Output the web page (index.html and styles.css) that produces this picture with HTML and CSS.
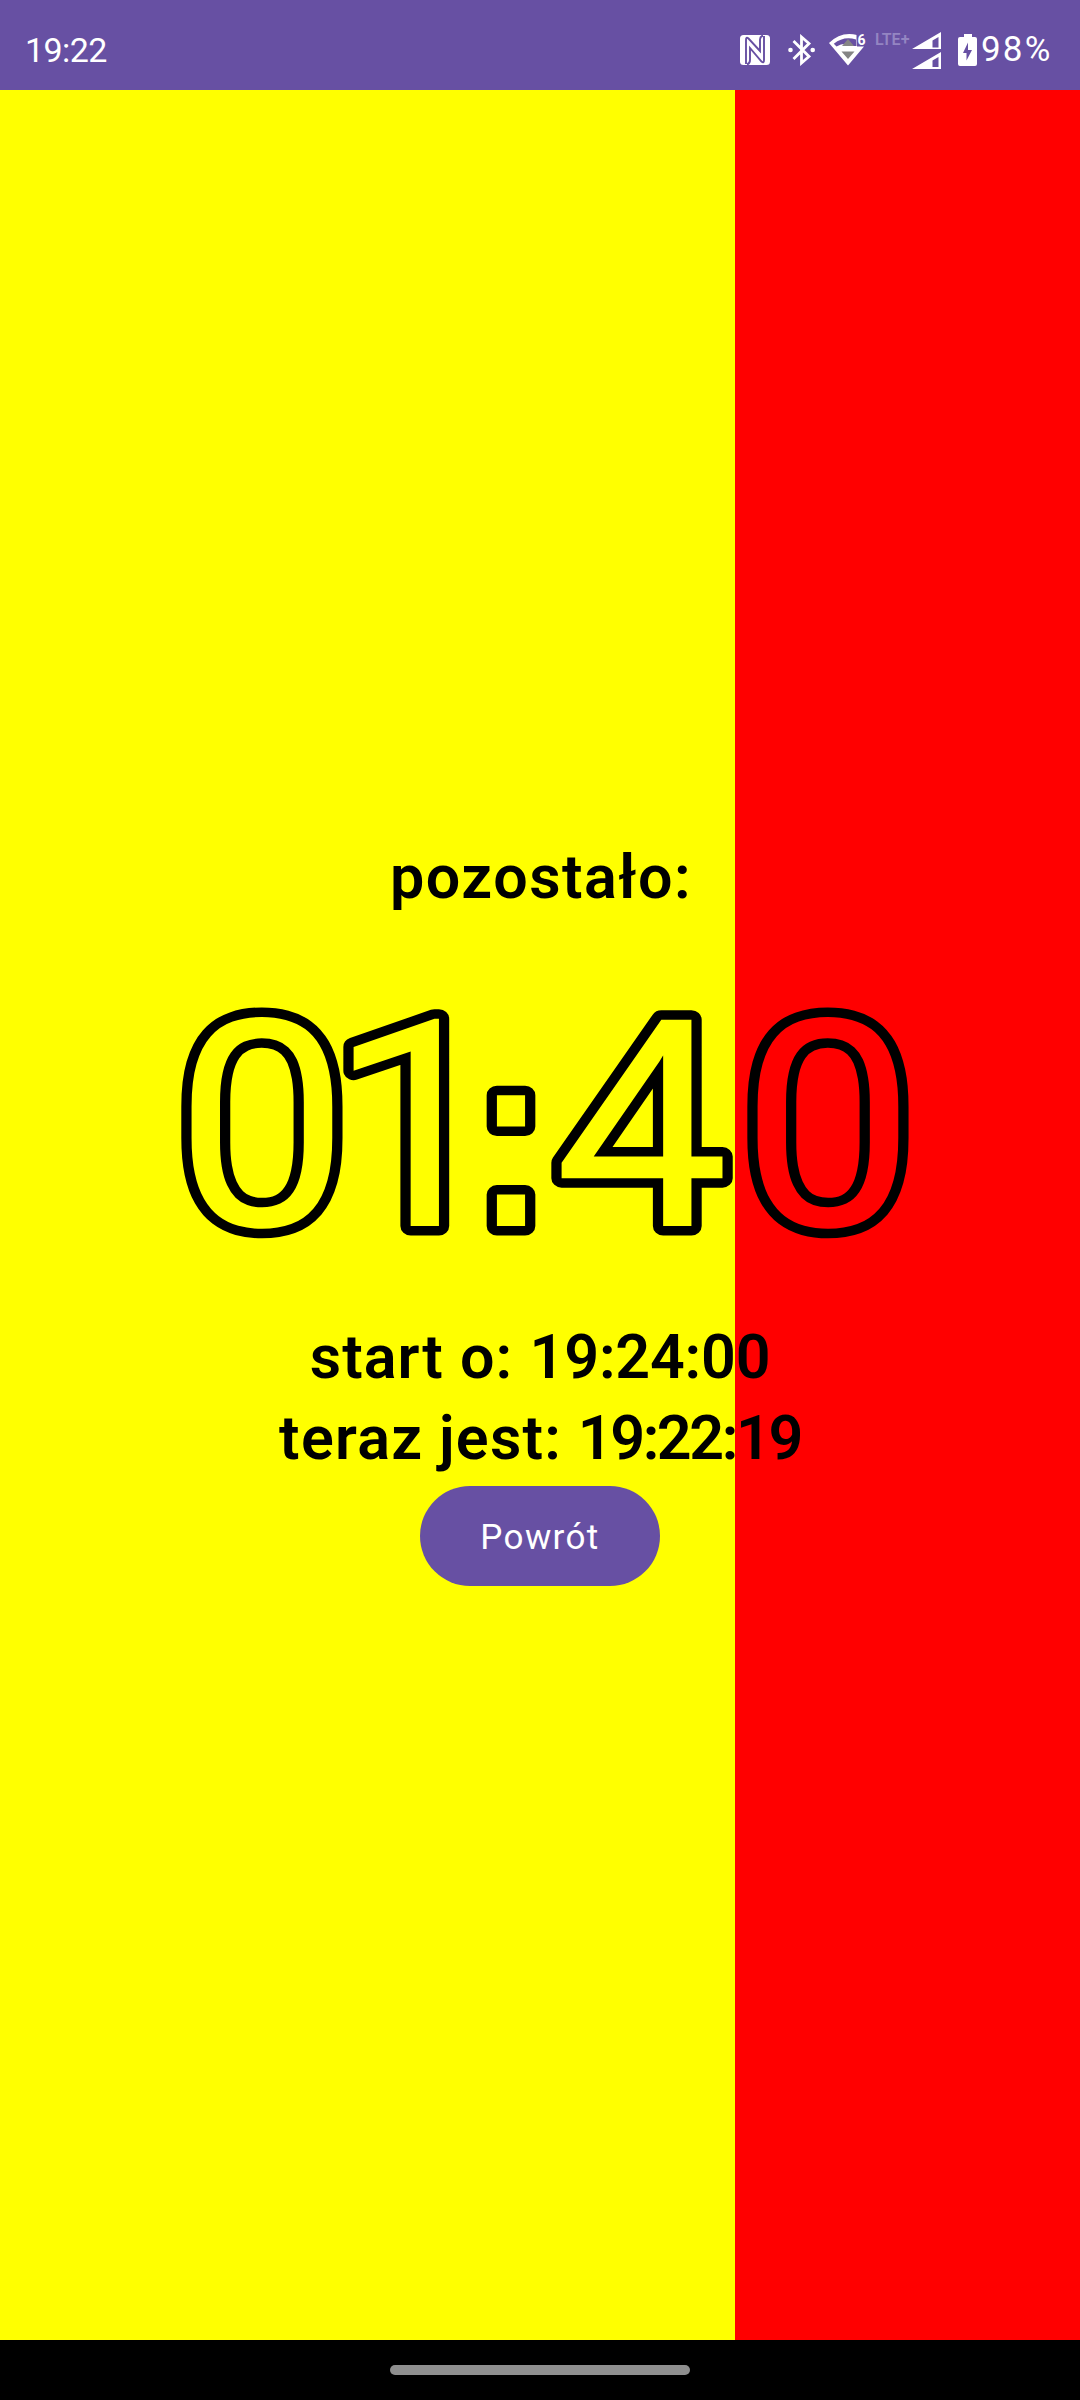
FILE: index.html
```
<!DOCTYPE html>
<html lang="pl">
<head>
<meta charset="utf-8">
<title>Odliczanie</title>
<link rel="stylesheet" href="styles.css">
</head>
<body>
<div class="screen">
  <header class="status">
    <span class="clock">19:22</span>
    <div class="icons">
      <svg class="nfc" width="30" height="30" viewBox="0 0 30 30">
        <rect width="30" height="30" rx="3.5" fill="#fff"/>
        <path d="M6 29V5Q6 1.500 8.500 3.500L20 16V4.500Q20 1.500 23 0.500" fill="none" stroke="#6750a3" stroke-width="1.900"/>
        <path d="M24 1V25Q24 28.500 21.500 26.500L10 13V25Q10 28.500 7 29.500" fill="none" stroke="#6750a3" stroke-width="1.900"/>
      </svg>
      <svg class="bt" width="28" height="32" viewBox="0 0 28 32">
        <path d="M5.500 7L21 22.500L13.500 29V3L21 9.500L5.500 25" fill="none" stroke="#fff" stroke-width="2.800"/>
        <circle cx="2.500" cy="16" r="2.300" fill="#fff"/><circle cx="24.700" cy="16" r="2.300" fill="#fff"/>
      </svg>
      <svg class="wifi" width="38" height="32" viewBox="0 0 38 32">
        <path d="M0 9Q12 -3 28 1V12.500H35L19 31.500Z" fill="#fff"/>
        <path d="M4.800 9.700Q15 1.500 27 5.500V12H24Q16 7.500 7.500 12.500Z" fill="#6750a3"/>
        <path d="M19 5L25 12H13ZM12.500 17.500H25.500L19 25Z" fill="#858585"/>
        <path d="M27.500 0H38V12H27.500Z" fill="#6750a3"/>
        <text x="28.500" y="10.500" class="wifi-gen">6</text>
      </svg>
      <span class="lte">LTE+</span>
      <svg class="signal" width="29" height="37" viewBox="0 0 29 37">
        <path d="M0 17L29 0V17ZM0 37L29 20V37Z" fill="#fff"/>
        <path d="M20.500 8.500L26.500 5V15.500H20.500ZM20.500 28.500L26.500 25V35H20.500Z" fill="#6750a3"/>
      </svg>
      <svg class="battery" width="19" height="32" viewBox="0 0 19 32">
        <path d="M6 0H14V3H17Q19 3 19 5V30Q19 32 17 32H2Q0 32 0 30V5Q0 3 2 3H6Z" fill="#fff"/>
        <path d="M10 8.500V16H14L8.500 26.500V19H5Z" fill="#6750a3"/>
      </svg>
      <span class="percent">98%</span>
    </div>
  </header>
  <main class="content">
    <p class="line left">pozostało:</p>
    <svg class="timer" width="1080" height="399" viewBox="0 918 1080 399">
      <defs>
        <text id="time" transform="scale(1.08 1)" x="242.600 384.700 473.100 594 766.700" y="1226">01<tspan class="colon">:</tspan>40</text>
        <mask id="outside" maskUnits="userSpaceOnUse" x="0" y="918" width="1080" height="399">
          <rect x="0" y="918" width="1080" height="399" fill="#fff"/>
          <use href="#time" fill="#000"/>
        </mask>
      </defs>
      <g mask="url(#outside)"><use class="outline" href="#time"/></g>
    </svg>
    <p class="line start"><span class="label">start o: </span><span class="value">19:24:00</span></p>
    <p class="line now"><span class="label">teraz jest: </span><span class="value">19:22:19</span></p>
    <button class="back" type="button">Powrót</button>
  </main>
  <footer class="nav"><div class="handle"></div></footer>
</div>
</body>
</html>
```

FILE: styles.css
```
body { margin: 0; font-family: Roboto, sans-serif; }
.screen { width: 1080px; height: 2400px; display: flex; flex-direction: column; overflow: hidden; }
.status { box-sizing: border-box; height: 90px; padding: 10px 26px 0 25px; background: #6750a3; color: #fff; display: flex; align-items: center; justify-content: space-between; font-size: 34px; line-height: 40px; font-weight: 400; }
.clock { letter-spacing: -0.6px; }
.icons { display: flex; align-items: center; width: 314px; }
.icons svg { flex: none; }
.bt { margin-left: 18px; }
.wifi { margin-left: 13px; overflow: visible; }
.wifi-gen { font: 700 14px Roboto, sans-serif; fill: #fff; }
.lte { margin: -21px 0 0 8px; width: 36px; font-size: 16px; font-weight: 600; line-height: 16px; color: #9485c2; }
.signal { margin-left: 1px; }
.battery { margin-left: 17px; }
.percent { margin-left: 4px; font-size: 35px; letter-spacing: 2.200px; }
.content { flex: 1; box-sizing: border-box; padding-top: 747px; display: flex; flex-direction: column; align-items: center; background: linear-gradient(to right, #ff0 735px, #f00 735px); }
.line { margin: 0; height: 81px; line-height: 81px; font-size: 61px; font-weight: 600; white-space: pre; color: #000; }
.left { letter-spacing: 1.500px; padding-left: 2px; }
.label { letter-spacing: 1.100px; }
.start .value { letter-spacing: -0.2px; }
.now .label { letter-spacing: 1.300px; word-spacing: -1px; }
.now .value { letter-spacing: -2.400px; }
.timer { display: block; flex: none; }
#time { font: 380 290px Roboto, sans-serif; text-anchor: middle; }
.colon { font: 400 253px "DejaVu Sans", sans-serif; }
.outline { fill: none; stroke: #000; stroke-width: 19px; stroke-linejoin: round; }
.back { margin-top: 7px; width: 240px; height: 100px; padding: 3px 0 0; border: 0; border-radius: 50px; background: #6750a3; color: #fff; font: 450 35px Roboto, sans-serif; letter-spacing: 1.400px; }
.nav { height: 60px; background: #000; display: flex; align-items: center; justify-content: center; }
.handle { width: 300px; height: 10px; border-radius: 5px; background: #8f8f8f; }
```
